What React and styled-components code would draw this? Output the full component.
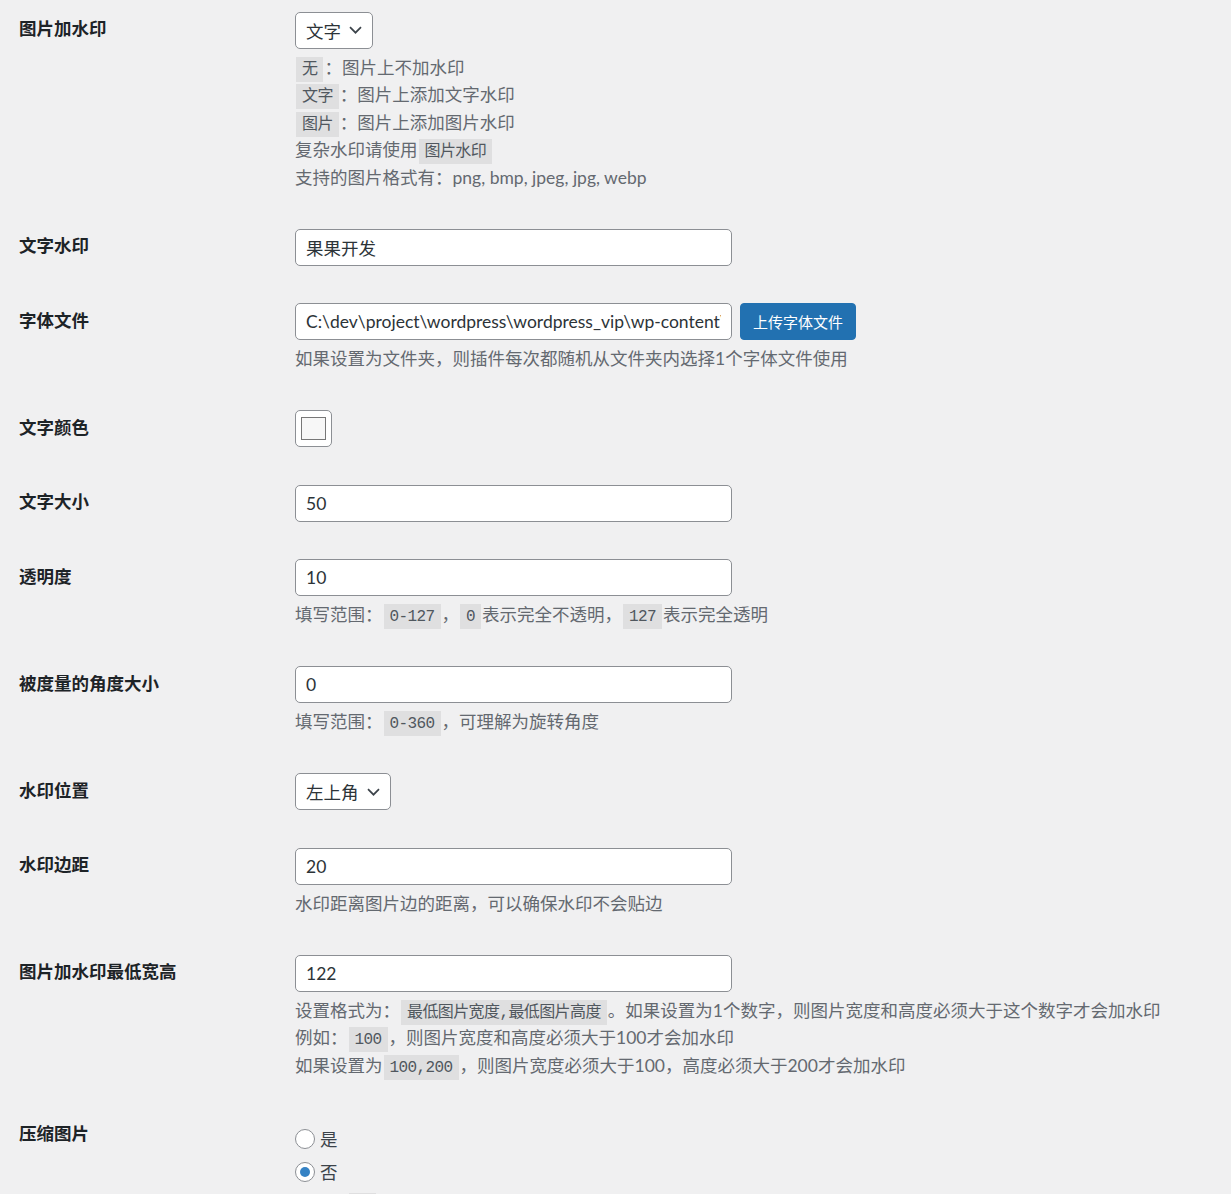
import React from 'react'
import styled, { createGlobalStyle } from 'styled-components'

const GlobalStyle = createGlobalStyle`
  html, body {
    margin: 0;
    background: #f0f0f1;
  }
  body {
    font-family: Lato, "Noto Sans CJK SC", sans-serif;
    font-size: 17.5px;
    color: #3c434a;
  }
`

// page is scrolled a few pixels, the first row starts just above the top edge
const Page = styled.div`
  padding: 0 20px 0 19px;
  margin-top: -7px;
`

const Row = styled.div`
  display: grid;
  grid-template-columns: 276px 1fr;
`

const Label = styled.div`
  padding: 25px 0;
  font-weight: 700;
  line-height: 22px;
  height: 22px;
  color: #1d2327;
`

const Field = styled.div`
  padding: 18.75px 0;
  display: flex;
  flex-direction: column;
  align-items: flex-start;
`

const Inline = styled.div`
  display: flex;
  align-items: center;
  gap: 8px;
`

const Input = styled.input`
  box-sizing: border-box;
  width: 437px;
  height: 37px;
  margin: 0;
  padding: 0 10px;
  border: 1px solid #8c8f94;
  border-radius: 5px;
  background: #fff;
  color: #2c3338;
  font: inherit;
  font-size: 17.5px;
  outline: none;
`

const Select = styled.div`
  box-sizing: border-box;
  display: inline-flex;
  align-items: center;
  gap: 8px;
  height: 37px;
  padding: 0 10px;
  border: 1px solid #8c8f94;
  border-radius: 5px;
  background: #fff;
  color: #2c3338;
`

const Button = styled.button`
  box-sizing: border-box;
  height: 37px;
  padding: 0 12px;
  border: 1px solid #2271b1;
  border-radius: 4px;
  background: #2271b1;
  color: #fff;
  font-family: inherit;
  font-size: 15px;
`

const ColorWell = styled.span`
  box-sizing: border-box;
  display: flex;
  align-items: center;
  justify-content: center;
  width: 37px;
  height: 37px;
  border: 1px solid #8c8f94;
  border-radius: 5px;
  background: #fff;
`

const Swatch = styled.span`
  box-sizing: border-box;
  width: 25px;
  height: 23px;
  border: 1px solid #777;
  background: ${p => p.$color};
`

const Desc = styled.div`
  margin-top: 5px;
  color: #646970;
  line-height: 27.5px;
`

// fixed height so mixed latin / CJK runs don't grow the line box
const Line = styled.div`
  height: 27.5px;
  white-space: nowrap;
`

const Code = styled.code`
  padding: 4px 6px 3px;
  margin: 0 1px;
  background: rgba(0, 0, 0, 0.07);
  color: #50575e;
  font-family: "Liberation Mono", "Noto Sans CJK SC", monospace;
  font-size: 16px;
  letter-spacing: -0.6px;
`

const Radios = styled.div`
  display: flex;
  flex-direction: column;
  gap: 7px;
  margin-top: 9px;
`

const RadioLabel = styled.label`
  display: flex;
  align-items: center;
  gap: 5px;
  height: 26px;
  color: #3c434a;
`

const RadioDot = styled.span`
  box-sizing: border-box;
  display: flex;
  align-items: center;
  justify-content: center;
  width: 20px;
  height: 20px;
  border: 1px solid #8c8f94;
  border-radius: 50%;
  background: #fff;
  &::after {
    content: '';
    width: 10px;
    height: 10px;
    border-radius: 50%;
    background: ${p => (p.$checked ? '#3582c4' : 'transparent')};
  }
`

const Chevron = () => (
  <svg width="13" height="8" viewBox="0 0 13 8" fill="none">
    <path d="M1 1.2L6.5 6.7L12 1.2" stroke="#3c434a" strokeWidth="1.7" />
  </svg>
)

const Dropdown = ({ value }) => (
  <Select>
    <span>{value}</span>
    <Chevron />
  </Select>
)

const Text = ({ value }) => <Input value={value} readOnly />

const Radio = ({ checked, children }) => (
  <RadioLabel>
    <RadioDot $checked={checked} />
    {children}
  </RadioLabel>
)

export default function App() {
  return (
    <>
      <GlobalStyle />
      <Page>
        <Row>
          <Label>图片加水印</Label>
          <Field>
            <Dropdown value="文字" />
            <Desc>
              <Line><Code>无</Code>：图片上不加水印</Line>
              <Line><Code>文字</Code>：图片上添加文字水印</Line>
              <Line><Code>图片</Code>：图片上添加图片水印</Line>
              <Line>复杂水印请使用<Code>图片水印</Code></Line>
              <Line>支持的图片格式有：png, bmp, jpeg, jpg, webp</Line>
            </Desc>
          </Field>
        </Row>

        <Row>
          <Label>文字水印</Label>
          <Field>
            <Text value="果果开发" />
          </Field>
        </Row>

        <Row>
          <Label>字体文件</Label>
          <Field>
            <Inline>
              <Text value="C:\dev\project\wordpress\wordpress_vip\wp-content\uploads\fonts" />
              <Button>上传字体文件</Button>
            </Inline>
            <Desc>
              <Line>如果设置为文件夹，则插件每次都随机从文件夹内选择1个字体文件使用</Line>
            </Desc>
          </Field>
        </Row>

        <Row>
          <Label>文字颜色</Label>
          <Field>
            <ColorWell>
              <Swatch $color="#f7f7f7" />
            </ColorWell>
          </Field>
        </Row>

        <Row>
          <Label>文字大小</Label>
          <Field>
            <Text value="50" />
          </Field>
        </Row>

        <Row>
          <Label>透明度</Label>
          <Field>
            <Text value="10" />
            <Desc>
              <Line>
                填写范围：<Code>0-127</Code>，<Code>0</Code>表示完全不透明，<Code>127</Code>表示完全透明
              </Line>
            </Desc>
          </Field>
        </Row>

        <Row>
          <Label>被度量的角度大小</Label>
          <Field>
            <Text value="0" />
            <Desc>
              <Line>填写范围：<Code>0-360</Code>，可理解为旋转角度</Line>
            </Desc>
          </Field>
        </Row>

        <Row>
          <Label>水印位置</Label>
          <Field>
            <Dropdown value="左上角" />
          </Field>
        </Row>

        <Row>
          <Label>水印边距</Label>
          <Field>
            <Text value="20" />
            <Desc>
              <Line>水印距离图片边的距离，可以确保水印不会贴边</Line>
            </Desc>
          </Field>
        </Row>

        <Row>
          <Label>图片加水印最低宽高</Label>
          <Field>
            <Text value="122" />
            <Desc>
              <Line>设置格式为：<Code>最低图片宽度,最低图片高度</Code>。如果设置为1个数字，则图片宽度和高度必须大于这个数字才会加水印</Line>
              <Line>例如：<Code>100</Code>，则图片宽度和高度必须大于100才会加水印</Line>
              <Line>如果设置为<Code>100,200</Code>，则图片宽度必须大于100，高度必须大于200才会加水印</Line>
            </Desc>
          </Field>
        </Row>

        <Row>
          <Label>压缩图片</Label>
          <Field>
            <Radios>
              <Radio>是</Radio>
              <Radio checked>否</Radio>
            </Radios>
            <Desc>
              <Line>默认为<Code>否</Code>，选择是则会对图片进行压缩</Line>
            </Desc>
          </Field>
        </Row>
      </Page>
    </>
  )
}
